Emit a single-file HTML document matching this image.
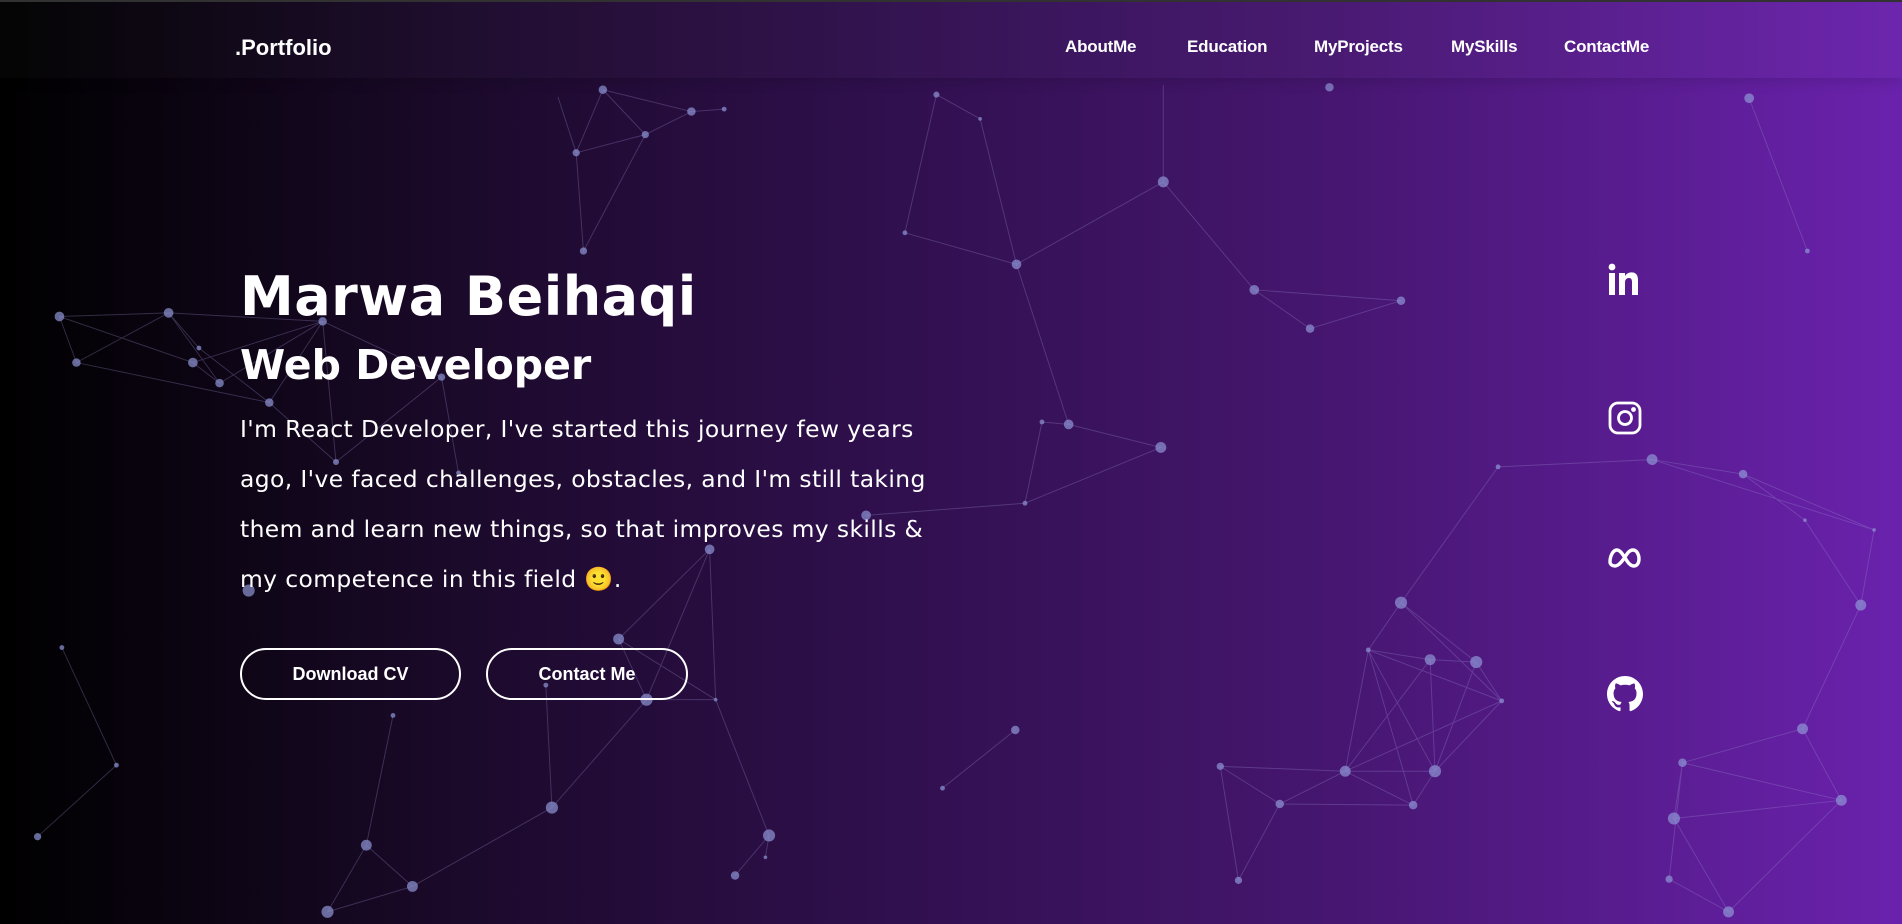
<!DOCTYPE html>
<html><head><meta charset="utf-8"><style>
*{margin:0;padding:0;box-sizing:border-box}
body{width:1902px;height:924px;overflow:hidden;font-family:"DejaVu Sans","Liberation Sans",sans-serif;color:#fff;
background:linear-gradient(90deg,#000 0%,#1c0a2c 25%,#2e0f4b 45%,#461670 70%,#6a22ad 100%);position:relative}
svg.bg{position:absolute;left:0;top:0;width:1902px;height:924px}
.top{position:absolute;left:0;top:0;width:1902px;height:2px;background:#333}
nav{position:absolute;left:0;top:2px;width:1902px;height:76px;background:rgba(255,255,255,0.02);box-shadow:0 4px 12px rgba(0,0,0,0.12)}
.logo{position:absolute;left:235px;top:35px;font-size:22px;font-weight:bold;font-family:"Liberation Sans",sans-serif}
.links{position:absolute;top:37px;font-size:17px;font-weight:bold;font-family:"Liberation Sans",sans-serif;letter-spacing:-0.2px}
h1{position:absolute;left:240px;top:265px;font-size:54px;font-weight:bold;letter-spacing:0.5px;white-space:nowrap}
h2{position:absolute;left:240px;top:341px;font-size:41px;font-weight:bold;white-space:nowrap}
p{position:absolute;left:240px;top:404px;width:720px;font-size:23.4px;line-height:50px;letter-spacing:0.4px}
.btn{position:absolute;top:648px;height:52px;border:2px solid #fff;border-radius:26px;font-size:18px;font-weight:bold;font-family:"Liberation Sans",sans-serif;display:flex;align-items:center;justify-content:center}
.ic{position:absolute;left:1607px;width:36px;height:36px}
</style></head><body>
<svg class="bg" viewBox="0 0 1568 762" preserveAspectRatio="none">
<g stroke="#9a8fd0" stroke-opacity="0.3" stroke-width="0.8" fill="none">
<path d="M497 74L475 126L532 111L570 92L597 90M497 74L532 111M497 74L570 92M475 126L481 207L532 111M460 80L475 126M772 78L808 98L838 218L746 192L772 78M838 218L959 150L1034 239L1080 271L1155 248L1034 239M959 150L959 70M1442 81L1490 207"/>
<path d="M49 261L139 258L266 265M49 261L63 299L139 258M49 261L159 299L181 316M63 299L222 332M139 258L181 316M139 258L164 287L222 332M159 299L266 265M181 316L266 265L222 332M266 265L364 311L378 390M277 381L364 311M222 332L277 381M266 265L277 381"/>
<path d="M859 348L881 350L957 369L845 415L859 348M845 415L714 425M881 350L838 218M585 453L510 527L533 577L590 577L585 453M510 527L590 577M585 453L533 577L455 666M450 565L455 666M590 577L634 689L606 722M634 689L631 707M324 590L302 697L340 731L270 752L302 697M340 731L455 666M51 534L96 631L31 690M837 602L777 650"/>
<path d="M1235 385L1362 379L1437 391L1488 429L1534 499M1362 379L1545 437L1534 499L1486 601M1437 391L1545 437M1235 385L1155 497M1155 497L1128 536L1179 544L1217 546L1238 578L1155 497M1128 536L1238 578M1155 497L1217 546M1179 544L1183 636L1109 636L1128 536M1128 536L1165 664M1217 546L1183 636L1165 664L1109 636L1055 663L1006 632L1109 636M1179 544L1109 636M1238 578L1183 636M1055 663L1165 664M1055 663L1021 726L1006 632M1238 578L1109 636M1128 536L1183 636"/>
<path d="M1486 601L1387 629L1380 675L1425 752L1376 725L1387 629M1486 601L1518 660L1380 675M1518 660L1425 752M1387 629L1518 660"/>
</g>
<g fill="#8f96d6" fill-opacity="0.7">
<circle cx="497" cy="74" r="3.5"/><circle cx="475" cy="126" r="3"/><circle cx="532" cy="111" r="3"/><circle cx="570" cy="92" r="3.5"/><circle cx="597" cy="90" r="2"/><circle cx="481" cy="207" r="3"/>
<circle cx="772" cy="78" r="2.5"/><circle cx="808" cy="98" r="1.5"/><circle cx="746" cy="192" r="2"/><circle cx="838" cy="218" r="4"/><circle cx="959" cy="150" r="4.5"/><circle cx="1034" cy="239" r="4"/><circle cx="1080" cy="271" r="3.5"/><circle cx="1155" cy="248" r="3.5"/><circle cx="1096" cy="72" r="3.5"/><circle cx="1442" cy="81" r="4"/><circle cx="1490" cy="207" r="2"/>
<circle cx="49" cy="261" r="4"/><circle cx="63" cy="299" r="3.5"/><circle cx="139" cy="258" r="4"/><circle cx="159" cy="299" r="4"/><circle cx="164" cy="287" r="2"/><circle cx="181" cy="316" r="3.5"/><circle cx="222" cy="332" r="3.5"/><circle cx="266" cy="265" r="3.5"/><circle cx="277" cy="381" r="2.5"/><circle cx="364" cy="311" r="3"/><circle cx="378" cy="390" r="2"/>
<circle cx="859" cy="348" r="2"/><circle cx="881" cy="350" r="4"/><circle cx="957" cy="369" r="4.5"/><circle cx="845" cy="415" r="2"/><circle cx="714" cy="425" r="4"/><circle cx="585" cy="453" r="4"/><circle cx="510" cy="527" r="4.5"/><circle cx="533" cy="577" r="5"/><circle cx="590" cy="577" r="1.5"/><circle cx="450" cy="565" r="2"/><circle cx="205" cy="487" r="5"/>
<circle cx="51" cy="534" r="2"/><circle cx="96" cy="631" r="2"/><circle cx="31" cy="690" r="3"/><circle cx="324" cy="590" r="2"/><circle cx="302" cy="697" r="4.5"/><circle cx="340" cy="731" r="4.5"/><circle cx="270" cy="752" r="5"/><circle cx="455" cy="666" r="5"/><circle cx="634" cy="689" r="5"/><circle cx="606" cy="722" r="3.5"/><circle cx="631" cy="707" r="1.5"/><circle cx="837" cy="602" r="3.5"/><circle cx="777" cy="650" r="2"/>
<circle cx="1235" cy="385" r="2"/><circle cx="1362" cy="379" r="4.5"/><circle cx="1437" cy="391" r="3.5"/><circle cx="1488" cy="429" r="1.5"/><circle cx="1545" cy="437" r="1.5"/><circle cx="1534" cy="499" r="4.5"/>
<circle cx="1155" cy="497" r="5"/><circle cx="1128" cy="536" r="2"/><circle cx="1179" cy="544" r="4.5"/><circle cx="1217" cy="546" r="5"/><circle cx="1238" cy="578" r="2"/><circle cx="1109" cy="636" r="4.5"/><circle cx="1183" cy="636" r="5"/><circle cx="1165" cy="664" r="3.5"/><circle cx="1055" cy="663" r="3.5"/><circle cx="1006" cy="632" r="3"/><circle cx="1021" cy="726" r="3"/>
<circle cx="1486" cy="601" r="4.5"/><circle cx="1387" cy="629" r="3.5"/><circle cx="1518" cy="660" r="4.5"/><circle cx="1380" cy="675" r="5"/><circle cx="1376" cy="725" r="3"/><circle cx="1425" cy="752" r="4.5"/>
</g></svg>
<div class="top"></div>
<nav></nav>
<div class="logo">.Portfolio</div>
<div class="links" style="left:1065px">AboutMe</div>
<div class="links" style="left:1187px">Education</div>
<div class="links" style="left:1314px">MyProjects</div>
<div class="links" style="left:1451px">MySkills</div>
<div class="links" style="left:1564px">ContactMe</div>
<h1>Marwa Beihaqi</h1>
<h2>Web Developer</h2>
<p>I'm React Developer, I've started this journey few years ago, I've faced challenges, obstacles, and I'm still taking them and learn new things, so that improves my skills &amp; my competence in this field <span style="font-family:'Noto Color Emoji','DejaVu Sans',sans-serif">🙂</span>.</p>
<div class="btn" style="left:240px;width:221px">Download CV</div>
<div class="btn" style="left:486px;width:202px">Contact Me</div>
<svg class="ic" style="top:262px" viewBox="0 0 36 36" fill="#fff"><circle cx="5" cy="5" r="3.4"/><rect x="2" y="11" width="6" height="22"/><path d="M12 11h6v3c1.5-2.4 3.8-3.6 6.6-3.6 5 0 6.4 3.4 6.4 8V33h-6V20c0-2.5-.8-4-3-4s-4 1.5-4 4.4V33h-6z"/></svg>
<svg class="ic" style="top:400px" viewBox="0 0 36 36" fill="none" stroke="#fff" stroke-width="2.8"><rect x="3" y="3" width="30" height="30" rx="8"/><circle cx="18" cy="18" r="6.5"/><circle cx="26.5" cy="9.5" r="1" fill="#fff"/></svg>
<svg class="ic" style="top:538px" viewBox="0 0 36 36" fill="none" stroke="#fff" stroke-width="3.4" stroke-linecap="round"><path d="M3 24c0-6 3-12 7-12s8 8 10 11 4 5 7 5 5-3 5-7-2-9-6-9-6 4-8 7-6 9-10 9c-3 0-5-2-5-4"/></svg>
<svg class="ic" style="top:676px" viewBox="0 0 16 16" fill="#fff"><path d="M8 0C3.580 0 0 3.58 0 8c0 3.54 2.29 6.530 5.47 7.59.4.07.55-.17.55-.38v-1.33c-2.22.48-2.690-1.070-2.690-1.070-.36-.92-.89-1.17-.89-1.17-.73-.5.06-.49.06-.49.8.06 1.23.82 1.23.82.71 1.22 1.87.87 2.33.66.07-.52.28-.87.51-1.07-1.78-.2-3.64-.89-3.64-3.95 0-.87.31-1.59.82-2.15-.08-.2-.36-1.02.08-2.12 0 0 .67-.21 2.2.82a7.6 7.6 0 0 1 4 0c1.53-1.04 2.2-.82 2.2-.82.44 1.1.16 1.92.08 2.12.51.56.82 1.27.82 2.15 0 3.07-1.87 3.75-3.65 3.95.29.25.54.73.54 1.48v2.2c0 .21.15.46.55.38A8.010 8.010 0 0 0 16 8c0-4.42-3.58-8-8-8z"/></svg>
</body></html>
